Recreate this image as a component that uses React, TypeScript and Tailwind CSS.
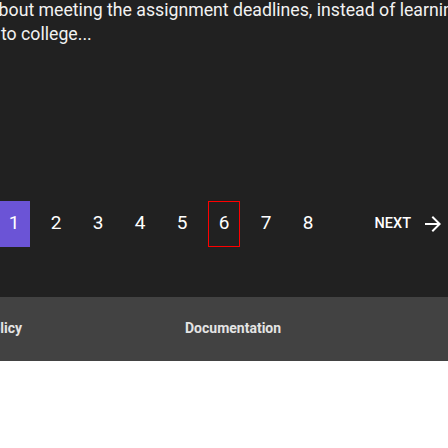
import React from "react";

const pages = [1, 2, 3, 4, 5, 6, 7, 8];

function ArrowForward() {
  return (
    <svg viewBox="0 0 24 24" className="h-6 w-6 fill-current">
      <path d="M12 4l-1.41 1.41L16.17 11H4v2h12.17l-5.58 5.59L12 20l8-8z" />
    </svg>
  );
}

export default function App() {
  const current = 1;
  const focused = 6;

  return (
    <div className="h-[448px] w-[448px] overflow-hidden bg-white [font-family:Roboto,sans-serif]">
      <section className="bg-[#212121] pb-[50px]">
        <div className="-mt-[2px] text-[17.7px] leading-[24px] text-[#f2f2f2]">
          <p className="-ml-[11px] whitespace-nowrap">
            about meeting the assignment deadlines, instead of learning
          </p>
          <p className="pl-[1px] whitespace-nowrap">to college...</p>
        </div>

        <nav className="mt-[155px] flex h-[46px] items-center">
          <div className="-ml-[2px] flex gap-[10px]">
            {pages.map((page) => (
              <button
                key={page}
                type="button"
                className={
                  page === current
                    ? "flex h-[46px] w-[32px] items-center justify-center bg-[#6b54d6] pb-[2px] text-[19px] text-white"
                    : page === focused
                      ? "flex h-[46px] w-[32px] items-center justify-center border border-[#ff0000] pb-[2px] text-[19px] text-white"
                      : "flex h-[46px] w-[32px] items-center justify-center pb-[2px] text-[19px] text-white"
                }
              >
                {page}
              </button>
            ))}
          </div>
          <button
            type="button"
            className="ml-auto mr-[3px] flex items-center gap-[10px] text-[14.5px] font-medium text-white"
          >
            NEXT
            <ArrowForward />
          </button>
        </nav>
      </section>

      <footer className="flex h-[64px] bg-[#424242] pt-[21px] text-[14px] font-bold leading-[20px] text-[#e4e4e4]">
        <div className="flex w-[22px] justify-end whitespace-nowrap">Privacy Policy</div>
        <div className="ml-[163px] whitespace-nowrap">Documentation</div>
      </footer>
    </div>
  );
}
